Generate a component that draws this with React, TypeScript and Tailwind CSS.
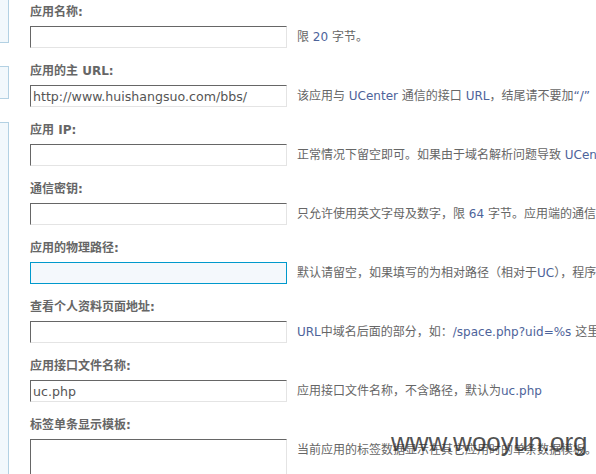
import React from 'react';

type Row = {
  label: React.ReactNode;
  value?: string;
  desc: React.ReactNode;
  focused?: boolean;
  textarea?: boolean;
};

// latin bits in the hints render in a muted blue
const L = ({ children }: { children: React.ReactNode }) => (
  <span className="text-[#4d639a]">{children}</span>
);

const rows: Row[] = [
  { label: '应用名称:', desc: <>限 <L>20</L> 字节。</> },
  {
    label: '应用的主 URL:',
    value: 'http://www.huishangsuo.com/bbs/',
    desc: <>该应用与 <L>UCenter</L> 通信的接口 <L>URL</L>，结尾请不要加<L>“/”</L></>,
  },
  {
    label: '应用 IP:',
    desc: <>正常情况下留空即可。如果由于域名解析问题导致 <L>UCenter</L> 与该应用通信失败，请尝试设置为该应用所在服务器的 <L>IP</L> 地址。</>,
  },
  {
    label: '通信密钥:',
    desc: <>只允许使用英文字母及数字，限 <L>64</L> 字节。应用端的通信密钥必须与此设置保持一致。</>,
  },
  {
    label: '应用的物理路径:',
    focused: true,
    desc: <>默认请留空，如果填写的为相对路径（相对于<L>UC</L>），程序会自动转换为绝对路径。</>,
  },
  {
    label: '查看个人资料页面地址:',
    desc: <><L>URL</L>中域名后面的部分，如：<L>/space.php?uid=%s</L> 这里的 <L>%s</L> 代表 <L>uid</L></>,
  },
  {
    label: '应用接口文件名称:',
    value: 'uc.php',
    desc: <>应用接口文件名称，不含路径，默认为<L>uc.php</L></>,
  },
  {
    label: '标签单条显示模板:',
    textarea: true,
    desc: <>当前应用的标签数据显示在其它应用时的单条数据模板。</>,
  },
];

const fieldBase =
  'w-[257px] shrink-0 border border-t-[#666] border-l-[#666] border-r-[#e4e4e4] border-b-[#e4e4e4] px-[2px] text-[12.6px] text-[#555] outline-none';

export default function App() {
  return (
    <div
      className="relative flex w-[596px] h-[474px] overflow-hidden bg-white text-[12px] text-[#666]"
      style={{ fontFamily: '"DejaVu Sans", "Noto Sans CJK SC", sans-serif' }}
    >
      {/* left tab strip */}
      <div className="flex flex-col w-[9px] shrink-0">
        <div className="h-[43px] bg-[#f2f8fc] border-r border-b border-[#b3d1e3]" />
        <div className="mt-[23px] h-[33px] bg-[#f2f8fc] border-r border-t border-b border-[#b3d1e3]" />
        <div className="mt-[23px] flex-1 bg-[#f2f8fc] border-r border-t border-[#b3d1e3]" />
      </div>

      <main className="flex-1 pl-[21px] pt-[1px]">
        {rows.map((row, i) => (
          <div key={i} className="mb-[12px]">
            <div className="h-[22px] leading-[22px] font-bold text-[#666] whitespace-nowrap">
              {row.label}
            </div>
            <div className="mt-[3px] flex items-start whitespace-nowrap">
              {row.textarea ? (
                <textarea className={`${fieldBase} h-[60px] resize-none bg-white`} />
              ) : (
                <input
                  type="text"
                  defaultValue={row.value}
                  className={
                    row.focused
                      ? 'w-[257px] h-[22px] shrink-0 border border-[#0099cc] bg-[#f4f8fc] px-[2px] text-[12.6px] outline-none'
                      : `${fieldBase} h-[22px] bg-white`
                  }
                />
              )}
              <div className="ml-[10px] leading-[22px]">{row.desc}</div>
            </div>
          </div>
        ))}
      </main>

      <div
        className="absolute left-[391px] top-[427px] text-[26px] leading-[30px] text-[#333]/85"
        style={{ fontFamily: '"Liberation Sans", Arial, sans-serif' }}
      >
        www.wooyun.org
      </div>
    </div>
  );
}
